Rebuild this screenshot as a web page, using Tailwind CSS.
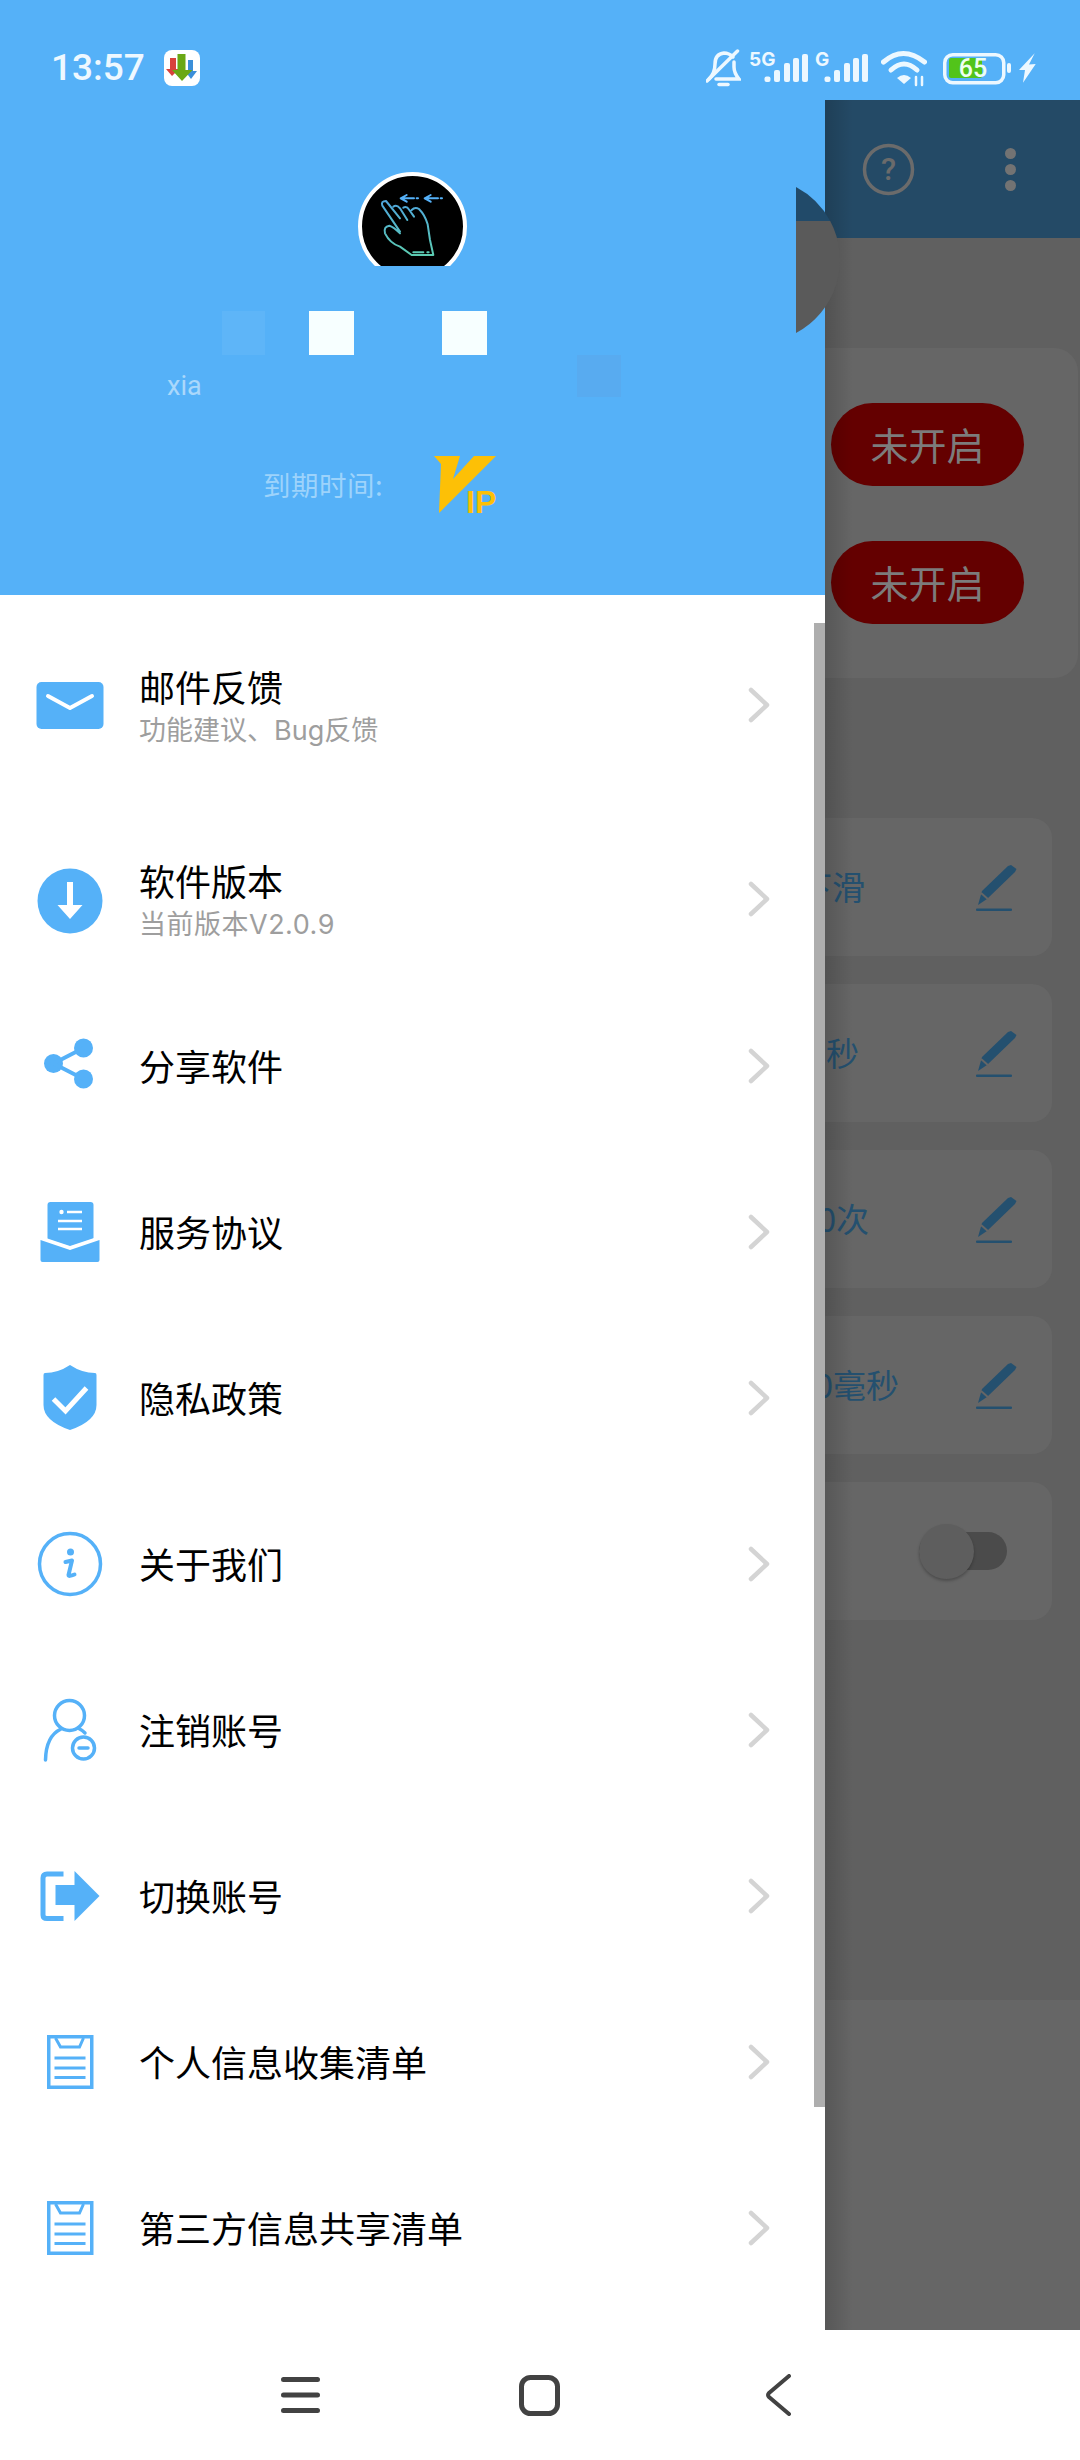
<!DOCTYPE html>
<html lang="zh-CN">
<head>
    <meta charset="UTF-8">
    <meta name="viewport" content="width=device-width, initial-scale=1.0">
    <title>手势助手</title>
    <script src="https://cdn.jsdelivr.net/npm/@tailwindcss/browser@4"></script>
</head>
<body class="bg-white font-['Noto_Sans_CJK_SC','Noto_Sans',sans-serif] antialiased">

<div class="relative w-[1080px] h-[2460px] overflow-hidden flex flex-col">

    <!-- Status bar -->
    <div class="relative z-30 h-[100px] shrink-0 bg-[#55b1f8] flex justify-between items-start pt-[48px] pl-[51px] pr-[44px]">
        <div class="flex items-center h-[40px]">
            <span class="font-['Roboto',sans-serif] font-medium text-[37px] leading-[40px] text-[#eef8ff]">13:57</span>
            <svg class="ml-[19px]" width="36" height="36" viewBox="0 0 36 36">
                <rect width="36" height="36" rx="8" fill="#fff"/>
                <path d="M6 8h6v11h3l-7 7-6-7h4z" fill="#d9423c"/>
                <path d="M24 10h5v11h4l-6 8-6-8h3z" fill="#3b8fd9"/>
                <path d="M13.5 4h8v16h7L18 31 8 20h5.500z" fill="#6aa814"/>
            </svg>
        </div>
        <div class="flex items-start text-[#edf8ff]">
            <svg width="35" height="40" viewBox="0 0 35 40" fill="none" stroke="currentColor" stroke-width="3.500" stroke-linecap="round">
                <path d="M3 31Q9 25 9 16Q9 6 18 5Q23 5 27 9"/>
                <path d="M28 14V19Q28 25 33 31H10"/>
                <path d="M31.500 3L1 33"/>
                <path d="M13 36.500H22"/>
            </svg>
            <svg class="ml-[8px]" width="59" height="40" viewBox="0 0 59 40" fill="currentColor">
                <text x="0" y="18" font-family="Inter, sans-serif" font-size="19" font-weight="700">5G</text>
                <rect x="15.500" y="28.500" width="6" height="5.500" rx="2"/>
                <rect x="25" y="22" width="6" height="12" rx="2"/>
                <rect x="35" y="15" width="6" height="19" rx="2"/>
                <rect x="44" y="10" width="6" height="24" rx="2"/>
                <rect x="53" y="6" width="6" height="28" rx="2"/>
            </svg>
            <svg class="ml-[7px]" width="53" height="40" viewBox="0 0 53 40" fill="currentColor">
                <text x="0" y="18" font-family="Inter, sans-serif" font-size="19" font-weight="700">G</text>
                <rect x="9.500" y="28.500" width="6" height="5.500" rx="2"/>
                <rect x="19" y="22" width="6" height="12" rx="2"/>
                <rect x="29" y="15" width="6" height="19" rx="2"/>
                <rect x="38" y="10" width="6" height="24" rx="2"/>
                <rect x="47" y="6" width="6" height="28" rx="2"/>
            </svg>
            <svg class="ml-[13px]" width="46" height="40" viewBox="0 0 46 40" fill="none" stroke="currentColor" stroke-linecap="round">
                <path d="M2.500 14Q22 -3 43.500 14" stroke-width="5"/>
                <path d="M10 22Q23 10 36 22" stroke-width="5"/>
                <path d="M16 30Q23 24 30 30L23 36Z" fill="currentColor" stroke="none"/>
                <path d="M35 29V37M41 29V37" stroke-width="2.500"/>
            </svg>
            <svg class="ml-[16px]" width="68" height="40" viewBox="0 0 68 40">
                <rect x="1.750" y="6.750" width="59" height="28" rx="8" fill="none" stroke="currentColor" stroke-width="3.500"/>
                <rect x="6" y="10" width="33" height="20" rx="2" fill="#52c41a"/>
                <rect x="64" y="15" width="4" height="10" rx="2" fill="currentColor"/>
                <text x="30" y="29" text-anchor="middle" font-family="Roboto, sans-serif" font-size="25" font-weight="500" fill="#eefff0">65</text>
            </svg>
            <svg class="ml-[8px]" width="17" height="40" viewBox="0 0 17 40" fill="currentColor">
                <polygon points="15.700,5.300 0,22 6,22 4,34.700 16.700,16 10,16.500"/>
            </svg>
        </div>
    </div>

    <!-- App behind the drawer -->
    <div class="flex-1 flex flex-col">
        <div class="h-[138px] shrink-0 bg-[#244a66] flex justify-end items-center pr-[64px]">
            <svg width="53" height="53" viewBox="0 0 53 53">
                <circle cx="26.500" cy="26.500" r="24" fill="none" stroke="#6b6b6b" stroke-width="3.500"/>
                <text x="26.500" y="37" text-anchor="middle" font-family="Roboto, sans-serif" font-size="31" font-weight="500" fill="#6b6b6b">?</text>
            </svg>
            <div class="ml-[90px] flex flex-col gap-[5px]">
                <span class="block w-[11px] h-[11px] rounded-full bg-[#737373]"></span>
                <span class="block w-[11px] h-[11px] rounded-full bg-[#737373]"></span>
                <span class="block w-[11px] h-[11px] rounded-full bg-[#737373]"></span>
            </div>
        </div>

        <div class="h-[1762px] shrink-0 bg-[#606060] pt-[110px]">
            <!-- Permission card -->
            <div class="h-[330px] mr-[2px] rounded-[24px] bg-[#666666] flex flex-col items-end gap-[55px] pt-[55px] pr-[54px]">
                <div class="w-[193px] h-[83px] pb-[2px] rounded-full bg-[#640000] flex items-center justify-center text-[38px] text-[#7c7c7c]">未开启</div>
                <div class="w-[193px] h-[83px] pb-[2px] rounded-full bg-[#640000] flex items-center justify-center text-[38px] text-[#7c7c7c]">未开启</div>
            </div>

            <!-- Setting cards -->
            <div class="mt-[140px] ml-[28px] mr-[28px] flex flex-col gap-[28px]">
                <div class="h-[138px] rounded-[20px] bg-[#666666] flex items-center justify-between pr-[35px]">
                    <span class="w-[837px] text-right text-[33px] text-[#24506f]">下滑</span>
                    <svg width="41" height="47" viewBox="0 0 41 47" fill="#24506f"><polygon points="6,27 32,2 35,1 40.500,5 39,8 11,35 2,41"/><path d="M5 29L13 36" stroke="#666666" stroke-width="2"/><rect y="44.500" width="36" height="2.500" rx="1"/></svg>
                </div>
                <div class="h-[138px] rounded-[20px] bg-[#666666] flex items-center justify-between pr-[35px]">
                    <span class="w-[831px] text-right text-[33px] text-[#24506f]">秒</span>
                    <svg width="41" height="47" viewBox="0 0 41 47" fill="#24506f"><polygon points="6,27 32,2 35,1 40.500,5 39,8 11,35 2,41"/><path d="M5 29L13 36" stroke="#666666" stroke-width="2"/><rect y="44.500" width="36" height="2.500" rx="1"/></svg>
                </div>
                <div class="h-[138px] rounded-[20px] bg-[#666666] flex items-center justify-between pr-[35px]">
                    <span class="w-[841px] text-right text-[33px] text-[#24506f]">0次</span>
                    <svg width="41" height="47" viewBox="0 0 41 47" fill="#24506f"><polygon points="6,27 32,2 35,1 40.500,5 39,8 11,35 2,41"/><path d="M5 29L13 36" stroke="#666666" stroke-width="2"/><rect y="44.500" width="36" height="2.500" rx="1"/></svg>
                </div>
                <div class="h-[138px] rounded-[20px] bg-[#666666] flex items-center justify-between pr-[35px]">
                    <span class="w-[871px] text-right text-[33px] text-[#24506f]">0毫秒</span>
                    <svg width="41" height="47" viewBox="0 0 41 47" fill="#24506f"><polygon points="6,27 32,2 35,1 40.500,5 39,8 11,35 2,41"/><path d="M5 29L13 36" stroke="#666666" stroke-width="2"/><rect y="44.500" width="36" height="2.500" rx="1"/></svg>
                </div>
                <div class="h-[138px] rounded-[20px] bg-[#666666] flex items-center justify-end pr-[45px]">
                    <div class="relative w-[88px] h-[38px] rounded-full bg-[#4b4b4b]">
                        <span class="absolute left-0 top-[-8px] w-[55px] h-[55px] rounded-full bg-[#5e5e5e] shadow-[0_2px_3px_rgba(0,0,0,0.25)]"></span>
                    </div>
                </div>
            </div>
        </div>

        <div class="flex-1 bg-[#666666]"></div>
    </div>

    <!-- Navigation bar -->
    <div class="relative z-30 h-[130px] shrink-0 bg-white flex items-center pl-[281px]">
        <svg width="39" height="40" viewBox="0 0 39 40" stroke="#424242" stroke-width="5" stroke-linecap="round">
            <path d="M2.500 4.500H36.500M2.500 20H36.500M2.500 35.500H36.500"/>
        </svg>
        <svg class="ml-[199px]" width="41" height="41" viewBox="0 0 41 41" fill="none" stroke="#424242" stroke-width="5">
            <rect x="2.500" y="2.500" width="36" height="36" rx="9"/>
        </svg>
        <svg class="ml-[204px]" width="28" height="42" viewBox="0 0 28 42" fill="none" stroke="#424242" stroke-width="4" stroke-linecap="round" stroke-linejoin="round">
            <path d="M25 2L5 19Q3 21 5 23L25 40"/>
        </svg>
    </div>

    <!-- Drawer -->
    <aside class="absolute left-0 top-0 z-10 w-[825px] h-[2330px] bg-white">
        <span class="absolute left-full top-[100px] w-[28px] h-[2230px] bg-linear-to-r from-black/15 to-transparent"></span>

        <!-- Profile header -->
        <div class="relative h-[595px] bg-[#55b1f8] pt-[172px] flex flex-col">
            <div class="w-[109px] h-[94px] ml-[358px] overflow-hidden">
                <div class="w-[109px] h-[109px] rounded-full border-[4px] border-white bg-black">
                    <svg width="101" height="101" viewBox="36 33 303 303" fill="none" stroke-linecap="round" stroke-linejoin="round">
                        <defs>
                            <linearGradient id="hand" x1="0" y1="0" x2="0" y2="1">
                                <stop offset="0" stop-color="#4fa6dc"/>
                                <stop offset="1" stop-color="#5ccbb2"/>
                            </linearGradient>
                        </defs>
                        <path d="M150 200L97 122Q92 108 108 108L150 160M130 125Q140 118 150 130L172 165M160 128Q170 122 178 135L192 155M185 135Q195 125 207 132Q225 150 233 178L240 225L250 270L185 270L150 245Q120 235 105 205Q100 185 118 182Q130 185 150 205M190 262H220M232 262H236" stroke="url(#hand)" stroke-width="6"/>
                        <path d="M192 100H160M170 90L152 100L170 110M200 100H204M264 100H232M242 90L224 100L242 110M272 100H276" stroke="#55b1f8" stroke-width="6"/>
                    </svg>
                </div>
            </div>
            <div class="flex mt-[45px] pl-[222px]">
                <span class="block w-[43px] h-[44px] bg-[#5eb5f8]"></span>
                <span class="block w-[45px] h-[44px] ml-[44px] bg-[#f7ffff]"></span>
                <span class="block w-[45px] h-[44px] ml-[88px] bg-[#f7ffff]"></span>
            </div>
            <div class="flex items-start h-[42px] pl-[167px]">
                <span class="mt-[14px] text-[27px] leading-[34px] text-white/50 font-['Roboto',sans-serif]">xia</span>
                <span class="block w-[44px] h-[42px] ml-[375px] bg-[#58abf0]"></span>
            </div>
            <div class="flex items-start mt-[59px] pl-[263px]">
                <span class="w-[171px] text-[27.5px] tracking-[0.5px] leading-[57px] text-[#9dd3fb]">到期时间:</span>
                <svg width="62" height="66" viewBox="0 0 62 66" fill="#fdc006">
                    <polygon points="0,0 26,0 19,23 40,0 62,0 5,57 7,8"/>
                    <text x="32" y="57" font-family="'Liberation Sans', sans-serif" font-size="32" font-weight="700">IP</text>
                </svg>
            </div>
        </div>

        <!-- Half circle handle over the drawer edge -->
        <svg class="absolute left-[796px] top-[187px]" width="44" height="146" viewBox="0 0 44 146">
            <path d="M0 0A82.500 82.500 0 0 1 34.200 34L0 34Z" fill="#214a69"/>
            <path d="M0 34L34.200 34A82.500 82.500 0 0 1 0 146Z" fill="#5a5a5a"/>
        </svg>

        <!-- Scrollbar -->
        <span class="absolute right-0 top-[623px] w-[11px] h-[1484px] bg-[#aeaeae]"></span>

        <!-- Menu -->
        <nav class="pt-[28px]">
            <a class="flex items-center h-[166px] mb-[28px] pr-[55px]">
                <span class="w-[139px] flex justify-center">
                    <svg width="80" height="80" viewBox="0 0 80 80">
                        <rect x="6.500" y="16" width="67" height="47" rx="5" fill="#55b1f8"/>
                        <path d="M18 30L40 42L62 30" fill="none" stroke="#fff" stroke-width="4" stroke-linecap="round" stroke-linejoin="round"/>
                    </svg>
                </span>
                <span class="flex-1 flex flex-col pt-[4px]">
                    <span class="text-[36px] leading-[46px] text-black">邮件反馈</span>
                    <span class="font-['Inter','Noto_Sans_CJK_SC',sans-serif] text-[27px] leading-[44px] text-[#9e9e9e]">功能建议、Bug反馈</span>
                </span>
                <svg class="mb-[3px]" width="22" height="36" viewBox="0 0 22 36" fill="none" stroke="#d4d4d4" stroke-width="4.500" stroke-linecap="round" stroke-linejoin="round"><path d="M3 3L19 18L3 33"/></svg>
            </a>
            <a class="flex items-center h-[167px] pr-[55px]">
                <span class="w-[139px] flex justify-center">
                    <svg width="80" height="80" viewBox="0 0 80 80">
                        <circle cx="40" cy="40" r="32.500" fill="#55b1f8"/>
                        <path d="M37 21H43V44H52.500L40 58L27.500 44H37Z" fill="#fff"/>
                    </svg>
                </span>
                <span class="flex-1 flex flex-col pt-[2px]">
                    <span class="text-[36px] leading-[46px] text-black">软件版本</span>
                    <span class="font-['Inter','Noto_Sans_CJK_SC',sans-serif] text-[27px] tracking-[0.5px] leading-[44px] text-[#9e9e9e]">当前版本V2.0.9</span>
                </span>
                <svg class="mb-[3px]" width="22" height="36" viewBox="0 0 22 36" fill="none" stroke="#d4d4d4" stroke-width="4.500" stroke-linecap="round" stroke-linejoin="round"><path d="M3 3L19 18L3 33"/></svg>
            </a>
            <a class="flex items-center h-[166px] pr-[55px]">
                <span class="w-[139px] flex justify-center">
                    <svg width="80" height="80" viewBox="0 0 80 80" fill="#55b1f8">
                        <circle cx="53.500" cy="21" r="9.500"/>
                        <circle cx="23.500" cy="36.500" r="9.500"/>
                        <circle cx="53.500" cy="52" r="9.500"/>
                        <path d="M53.500 21L23.500 36.500L53.500 52" fill="none" stroke="#55b1f8" stroke-width="4"/>
                    </svg>
                </span>
                <span class="flex-1 pb-[5px] text-[36px] leading-[46px] text-black">分享软件</span>
                <svg class="mb-[3px]" width="22" height="36" viewBox="0 0 22 36" fill="none" stroke="#d4d4d4" stroke-width="4.500" stroke-linecap="round" stroke-linejoin="round"><path d="M3 3L19 18L3 33"/></svg>
            </a>
            <a class="flex items-center h-[166px] pr-[55px]">
                <span class="w-[139px] flex justify-center">
                    <svg width="80" height="80" viewBox="0 0 80 80">
                        <rect x="17.500" y="9" width="46" height="46" rx="3" fill="#55b1f8"/>
                        <path d="M10 43L40 53L70 43V70H10Z" fill="#fff"/>
                        <path d="M10.500 47L40 57L69.500 47V67Q69.500 69 67.500 69H12.500Q10.500 69 10.500 67Z" fill="#55b1f8"/>
                        <circle cx="31.500" cy="19" r="2.200" fill="#fff"/>
                        <path d="M37 19H52M28 28H52M28 36H52" stroke="#fff" stroke-width="2.500"/>
                    </svg>
                </span>
                <span class="flex-1 pb-[5px] text-[36px] leading-[46px] text-black">服务协议</span>
                <svg class="mb-[3px]" width="22" height="36" viewBox="0 0 22 36" fill="none" stroke="#d4d4d4" stroke-width="4.500" stroke-linecap="round" stroke-linejoin="round"><path d="M3 3L19 18L3 33"/></svg>
            </a>
            <a class="flex items-center h-[166px] pr-[55px]">
                <span class="w-[139px] flex justify-center">
                    <svg width="80" height="80" viewBox="0 0 80 80">
                        <path d="M40 6Q28 14 15 14Q13.500 14 13.500 16V46Q13.500 62 40 71Q66.500 62 66.500 46V16Q66.500 14 65 14Q52 14 40 6Z" fill="#55b1f8"/>
                        <path d="M23.500 40L35.500 52L56.500 29" fill="none" stroke="#fff" stroke-width="5"/>
                    </svg>
                </span>
                <span class="flex-1 pb-[5px] text-[36px] leading-[46px] text-black">隐私政策</span>
                <svg class="mb-[3px]" width="22" height="36" viewBox="0 0 22 36" fill="none" stroke="#d4d4d4" stroke-width="4.500" stroke-linecap="round" stroke-linejoin="round"><path d="M3 3L19 18L3 33"/></svg>
            </a>
            <a class="flex items-center h-[166px] pr-[55px]">
                <span class="w-[139px] flex justify-center">
                    <svg width="80" height="80" viewBox="0 0 80 80" fill="none" stroke="#55b1f8">
                        <circle cx="40" cy="39" r="30.500" stroke-width="3.500"/>
                        <circle cx="40.500" cy="27" r="3.500" fill="#55b1f8" stroke="none"/>
                        <path d="M35.500 37L42 35.500L38.500 50Q38.500 52 44.500 49.500" stroke-width="4" stroke-linecap="round" stroke-linejoin="round"/>
                    </svg>
                </span>
                <span class="flex-1 pb-[5px] text-[36px] leading-[46px] text-black">关于我们</span>
                <svg class="mb-[3px]" width="22" height="36" viewBox="0 0 22 36" fill="none" stroke="#d4d4d4" stroke-width="4.500" stroke-linecap="round" stroke-linejoin="round"><path d="M3 3L19 18L3 33"/></svg>
            </a>
            <a class="flex items-center h-[166px] pr-[55px]">
                <span class="w-[139px] flex justify-center">
                    <svg width="80" height="80" viewBox="0 0 80 80" fill="none" stroke="#55b1f8" stroke-width="3.500" stroke-linecap="round">
                        <circle cx="39.500" cy="24.500" r="15"/>
                        <path d="M15.500 69Q16 45 31 38"/>
                        <path d="M48 37Q52 39 55 42"/>
                        <circle cx="53.500" cy="57" r="11"/>
                        <path d="M49 57H58"/>
                    </svg>
                </span>
                <span class="flex-1 pb-[5px] text-[36px] leading-[46px] text-black">注销账号</span>
                <svg class="mb-[3px]" width="22" height="36" viewBox="0 0 22 36" fill="none" stroke="#d4d4d4" stroke-width="4.500" stroke-linecap="round" stroke-linejoin="round"><path d="M3 3L19 18L3 33"/></svg>
            </a>
            <a class="flex items-center h-[166px] pr-[55px]">
                <span class="w-[139px] flex justify-center">
                    <svg width="80" height="80" viewBox="0 0 80 80">
                        <path d="M33.500 17H17Q13 17 13 21V58Q13 61.500 17 61.500H33.500" fill="none" stroke="#55b1f8" stroke-width="5"/>
                        <polygon points="25.500,28 44.500,28 44.500,14 69.500,39 44.500,64 44.500,48 25.500,48" fill="#55b1f8"/>
                    </svg>
                </span>
                <span class="flex-1 pb-[5px] text-[36px] leading-[46px] text-black">切换账号</span>
                <svg class="mb-[3px]" width="22" height="36" viewBox="0 0 22 36" fill="none" stroke="#d4d4d4" stroke-width="4.500" stroke-linecap="round" stroke-linejoin="round"><path d="M3 3L19 18L3 33"/></svg>
            </a>
            <a class="flex items-center h-[166px] pr-[55px]">
                <span class="w-[139px] flex justify-center">
                    <svg width="80" height="80" viewBox="0 0 80 80" fill="none" stroke="#55b1f8" stroke-width="3.500">
                        <rect x="18.750" y="13.750" width="43" height="50.500"/>
                        <path d="M25.500 15L30.500 24H49.500L53.500 15" stroke-width="3"/>
                        <path d="M24.500 35H55.500M24.500 45H55.500M24.500 54.500H55.500" stroke-width="3"/>
                    </svg>
                </span>
                <span class="flex-1 pb-[5px] text-[36px] leading-[46px] text-black">个人信息收集清单</span>
                <svg class="mb-[3px]" width="22" height="36" viewBox="0 0 22 36" fill="none" stroke="#d4d4d4" stroke-width="4.500" stroke-linecap="round" stroke-linejoin="round"><path d="M3 3L19 18L3 33"/></svg>
            </a>
            <a class="flex items-center h-[166px] pr-[55px]">
                <span class="w-[139px] flex justify-center">
                    <svg width="80" height="80" viewBox="0 0 80 80" fill="none" stroke="#55b1f8" stroke-width="3.500">
                        <rect x="18.750" y="13.750" width="43" height="50.500"/>
                        <path d="M25.500 15L30.500 24H49.500L53.500 15" stroke-width="3"/>
                        <path d="M24.500 35H55.500M24.500 45H55.500M24.500 54.500H55.500" stroke-width="3"/>
                    </svg>
                </span>
                <span class="flex-1 pb-[5px] text-[36px] leading-[46px] text-black">第三方信息共享清单</span>
                <svg class="mb-[3px]" width="22" height="36" viewBox="0 0 22 36" fill="none" stroke="#d4d4d4" stroke-width="4.500" stroke-linecap="round" stroke-linejoin="round"><path d="M3 3L19 18L3 33"/></svg>
            </a>
        </nav>
    </aside>
</div>

</body>
</html>
